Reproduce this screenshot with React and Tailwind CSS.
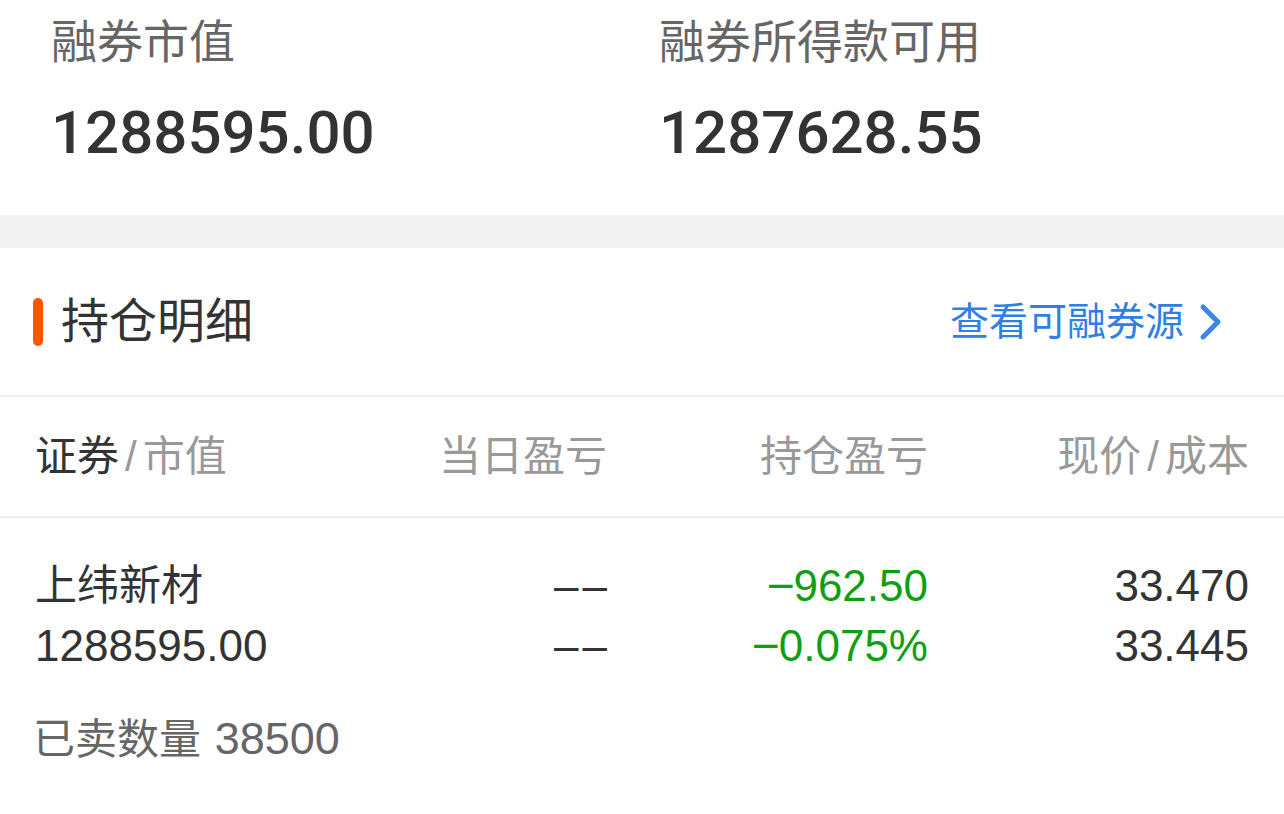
const font = { fontFamily: '"Liberation Sans", "Noto Sans CJK SC", sans-serif' };
const numFont = { fontFamily: 'Roboto, "Liberation Sans", sans-serif' };

function Summary({ label, value }) {
  return (
    <div className="flex w-[608px] flex-col">
      <div className="h-[60px] text-[46px] leading-[60px] text-[#666]">{label}</div>
      <div className="mt-[31px] h-[60px] text-[60px] font-medium leading-[60px] text-[#333]" style={numFont}>
        {value}
      </div>
    </div>
  );
}

function Neg({ children }) {
  return (
    <>
      <span className="inline-block scale-x-110">−</span>
      {children}
    </>
  );
}

export default function App() {
  return (
    <div className="min-h-[814px] w-[1284px] bg-white" style={font}>
      <section className="flex h-[215px] pl-[51px] pt-[12px]">
        <Summary label="融券市值" value="1288595.00" />
        <Summary label="融券所得款可用" value="1287628.55" />
      </section>

      <div className="h-[33px] bg-[#f3f3f3]" />

      <div className="flex h-[147px] items-center justify-between pl-[33px] pr-[60px]">
        <div className="flex items-center">
          <span className="h-[48px] w-[10px] rounded-full bg-[#ff5500]" />
          <span className="ml-[18px] text-[48px] leading-[60px] text-[#333]">持仓明细</span>
        </div>
        <div className="flex items-center text-[#2f80e6]">
          <span className="text-[39px] leading-[50px]">查看可融券源</span>
          <svg className="ml-[14px]" width="26" height="38" viewBox="0 0 26 38" fill="none">
            <path d="M5 4 L20 19 L5 34" stroke="#3a85e6" strokeWidth="5" strokeLinecap="round" strokeLinejoin="round" />
          </svg>
        </div>
      </div>

      <div className="h-[2px] bg-[#eeeeee]" />

      <div className="grid h-[119px] grid-cols-[252px_320px_321px_321px] items-center pl-[35px] text-[42px] leading-[60px] text-[#999]">
        <div className="whitespace-nowrap">
          <span className="text-[#333]">证券</span>
          <span className="px-[6px]">/</span>市值
        </div>
        <div className="text-right">当日盈亏</div>
        <div className="text-right">持仓盈亏</div>
        <div className="whitespace-nowrap text-right">
          现价<span className="px-[6px]">/</span>成本
        </div>
      </div>

      <div className="h-[2px] bg-[#eeeeee]" />

      <div className="grid grid-cols-[252px_320px_321px_321px] pl-[35px] pt-[38px] text-[44px] leading-[60px]">
        <div className="whitespace-nowrap text-[#333]">
          <div className="text-[42px]">上纬新材</div>
          <div>1288595.00</div>
        </div>
        <div className="text-right text-[#333]">
          <div>
            <span className="mr-[-4px] tracking-[4px]">––</span>
          </div>
          <div>
            <span className="mr-[-4px] tracking-[4px]">––</span>
          </div>
        </div>
        <div className="text-right text-[#0e9f12]">
          <div>
            <Neg>962.50</Neg>
          </div>
          <div>
            <Neg>0.075%</Neg>
          </div>
        </div>
        <div className="text-right text-[#333]">
          <div>33.470</div>
          <div>33.445</div>
        </div>
      </div>

      <div className="mt-[33px] pl-[33px] text-[42px] leading-[60px] text-[#666]">
        已卖数量 <span className="ml-[2px] text-[45px]">38500</span>
      </div>
    </div>
  );
}
